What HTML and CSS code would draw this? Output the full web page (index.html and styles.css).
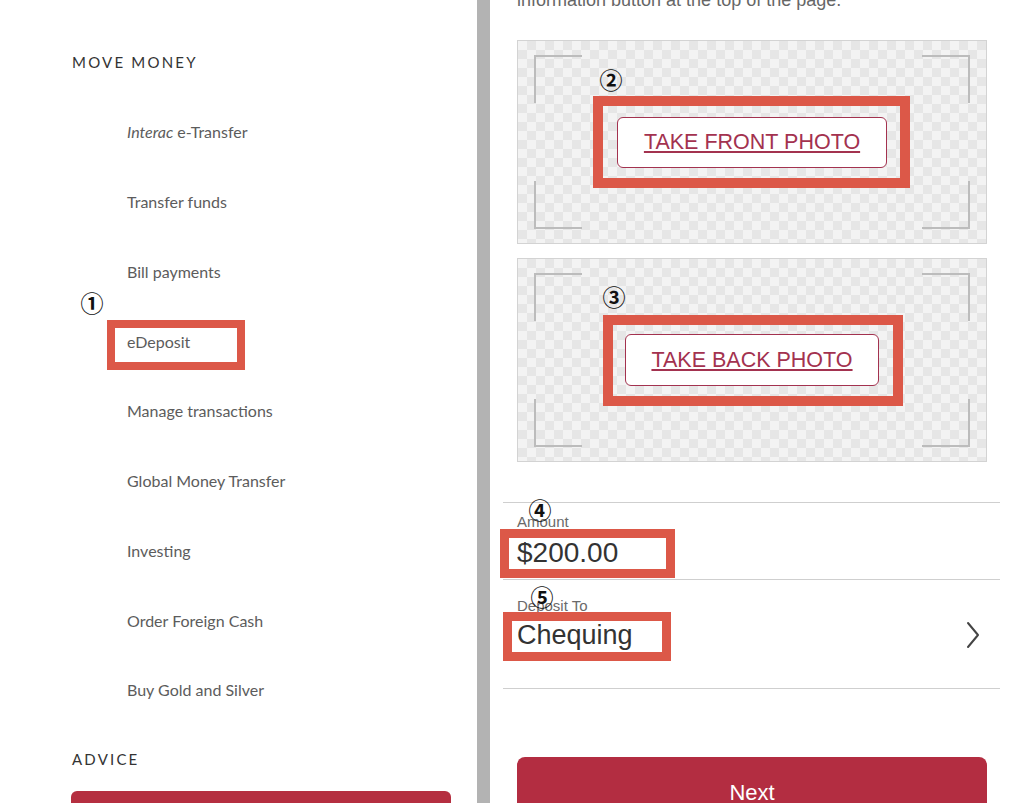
FILE: index.html
```html
<!DOCTYPE html>
<html lang="en">
<head>
<meta charset="utf-8">
<title>eDeposit</title>
<link rel="stylesheet" href="styles.css">
</head>
<body>
<div class="page">
  <nav class="sidebar">
    <h2 class="section-title">MOVE MONEY</h2>
    <ul class="menu">
      <li class="menu-item"><span><em>Interac</em> e-Transfer</span></li>
      <li class="menu-item"><span>Transfer funds</span></li>
      <li class="menu-item"><span>Bill payments</span></li>
      <li class="menu-item menu-item--marked"><span>eDeposit</span>
        <span class="badge badge-1">①</span>
        <span class="annot annot-1"></span>
      </li>
      <li class="menu-item"><span>Manage transactions</span></li>
      <li class="menu-item"><span>Global Money Transfer</span></li>
      <li class="menu-item"><span>Investing</span></li>
      <li class="menu-item"><span>Order Foreign Cash</span></li>
      <li class="menu-item"><span>Buy Gold and Silver</span></li>
    </ul>
    <h2 class="section-title section-title--advice">ADVICE</h2>
    <div class="advice-btn"></div>
  </nav>
  <div class="divider"></div>
  <main class="main">
    <p class="intro">information button at the top of the page.</p>
    <div class="photo-box">
      <span class="corner corner-tl"></span>
      <span class="corner corner-tr"></span>
      <span class="corner corner-bl"></span>
      <span class="corner corner-br"></span>
      <button class="photo-btn photo-btn--front">TAKE FRONT PHOTO</button>
      <span class="badge badge-2">②</span>
      <span class="annot annot-2"></span>
    </div>
    <div class="photo-box photo-box--back">
      <span class="corner corner-tl"></span>
      <span class="corner corner-tr"></span>
      <span class="corner corner-bl"></span>
      <span class="corner corner-br"></span>
      <button class="photo-btn photo-btn--back">TAKE BACK PHOTO</button>
      <span class="badge badge-3">③</span>
      <span class="annot annot-3"></span>
    </div>
    <div class="form">
      <div class="field field--amount">
        <div class="field-label">Amount</div>
        <div class="field-value field-value--amount">$200.00</div>
        <span class="badge badge-4">④</span>
        <span class="annot annot-4"></span>
      </div>
      <div class="field field--account">
        <div class="field-text">
          <div class="field-label">Deposit To</div>
          <div class="field-value">Chequing</div>
        </div>
        <svg class="chevron" width="14" height="28" viewBox="0 0 14 28"><polyline points="2,2 12,14 2,26" fill="none" stroke="#444" stroke-width="2" stroke-linecap="round" stroke-linejoin="round"/></svg>
        <span class="badge badge-5">⑤</span>
        <span class="annot annot-5"></span>
      </div>
    </div>
    <button class="next-btn">Next</button>
  </main>
</div>
</body>
</html>
```
FILE: styles.css
```css
html, body {
  margin: 0;
  padding: 0;
  height: 803px;
  overflow: hidden;
  background: #fff;
}

.page {
  display: flex;
  height: 803px;
}

/* ---------- Sidebar ---------- */
.sidebar {
  width: 477px;
  flex: none;
  box-sizing: border-box;
  padding-left: 72px;
  font-family: Lato, "Open Sans", sans-serif;
}

.section-title {
  margin: 0;
  padding-top: 52px;
  font-size: 15px;
  line-height: 20px;
  font-weight: 400;
  letter-spacing: 2.2px;
  color: #333;
}

.section-title--advice {
  padding-top: 24px;
}

.menu {
  list-style: none;
  margin: 25px 0 0;
  padding: 0 0 0 55px;
}

.menu-item {
  position: relative;
  height: 69.75px;
  display: flex;
  align-items: center;
  font-size: 16px;
  color: #5c5c5c;
}

.menu-item em {
  font-style: italic;
}

.advice-btn {
  margin: 22px 0 0 -1px;
  width: 380px;
  height: 40px;
  background: #b52f40;
  border-radius: 6px;
}

.divider {
  width: 13px;
  flex: none;
  background: #b3b3b3;
}

/* ---------- Main ---------- */
.main {
  flex: 1;
  box-sizing: border-box;
  padding: 0 37px 0 27px;
  font-family: "Liberation Sans", Arial, sans-serif;
}

.intro {
  margin: -11px 0 0;
  font-size: 18px;
  line-height: 22px;
  color: #666;
  white-space: nowrap;
}

.photo-box {
  position: relative;
  margin-top: 29px;
  height: 204px;
  box-sizing: border-box;
  border: 1px solid #d3d3d3;
  background-color: #f3f3f3;
  background-image:
    linear-gradient(45deg, #e6e6e6 25%, transparent 25%, transparent 75%, #e6e6e6 75%),
    linear-gradient(45deg, #e6e6e6 25%, transparent 25%, transparent 75%, #e6e6e6 75%);
  background-size: 18px 18px;
  background-position: 0 0, 9px 9px;
  display: flex;
  align-items: center;
  justify-content: center;
}

.photo-box--back {
  margin-top: 14px;
}

.corner {
  position: absolute;
  width: 46px;
  height: 46px;
  border-color: #bcbcbc;
  border-style: solid;
  border-width: 0;
}
.corner-tl { top: 14px; left: 16px; border-top-width: 2px; border-left-width: 2px; }
.corner-tr { top: 14px; right: 16px; border-top-width: 2px; border-right-width: 2px; }
.corner-bl { bottom: 14px; left: 16px; border-bottom-width: 2px; border-left-width: 2px; }
.corner-br { bottom: 14px; right: 16px; border-bottom-width: 2px; border-right-width: 2px; }

.photo-btn {
  height: 51px;
  box-sizing: border-box;
  background: #fff;
  border: 1px solid #a3324f;
  border-radius: 6px;
  color: #a3324f;
  font-family: "Liberation Sans", Arial, sans-serif;
  font-size: 21.5px;
  text-decoration: underline;
  text-underline-offset: 2px;
  padding: 0;
}
.photo-btn--front { width: 270px; }
.photo-btn--back { width: 254px; height: 52px; }

/* ---------- Form ---------- */
.form {
  margin: 40px -13px 0 -14px;
}

.field {
  position: relative;
  border-top: 1px solid #cfcfcf;
  padding-left: 14px;
}

.field--amount {
  padding-top: 10px;
  padding-bottom: 10px;
}

.field--account {
  padding-top: 17px;
  padding-bottom: 37px;
  padding-right: 20px;
  border-bottom: 1px solid #cfcfcf;
  display: flex;
  align-items: flex-end;
  justify-content: space-between;
}

.field-label {
  font-size: 15px;
  line-height: 18px;
  color: #6a6a6a;
}

.field-value {
  margin-top: 6px;
  font-size: 27px;
  line-height: 32px;
  color: #333;
}

.field-value--amount {
  font-size: 28px;
}

.field--account .field-value {
  margin-top: 4px;
}

.chevron {
  display: block;
  margin-bottom: 2px;
}

.next-btn {
  display: block;
  margin-top: 68px;
  width: 100%;
  height: 68px;
  border: 0;
  border-radius: 8px;
  background: #b32d41;
  color: #fff;
  font-family: "Liberation Sans", Arial, sans-serif;
  font-size: 22px;
  padding: 4px 0 0;
}

/* ---------- Annotation overlays ---------- */
.annot {
  position: absolute;
  box-sizing: border-box;
  border: 9px solid #dc5848;
  pointer-events: none;
}

.annot-1 { left: -20px; top: 14px; width: 138px; height: 50px; border-width: 8px; }
.annot-2 { left: 75px; top: 55px; width: 317px; height: 92px; border-width: 10px; }
.annot-3 { left: 85px; top: 56px; width: 300px; height: 91px; border-width: 10px; }
.annot-4 { left: -3px; top: 26px; width: 175px; height: 49px; }
.annot-5 { left: 0; top: 32px; width: 168px; height: 49px; }

.badge {
  position: absolute;
  transform: translate(-50%, -50%);
  font-family: "Noto Sans CJK JP", "DejaVu Sans", sans-serif;
  font-size: 23px;
  font-weight: 700;
  line-height: 1;
  color: #111;
}

.badge-1 { left: -35px; top: -4px; }
.badge-2 { left: 93px; top: 38px; }
.badge-3 { left: 96px; top: 37px; }
.badge-4 { left: 37px; top: 6px; }
.badge-5 { left: 39px; top: 16px; }
```
